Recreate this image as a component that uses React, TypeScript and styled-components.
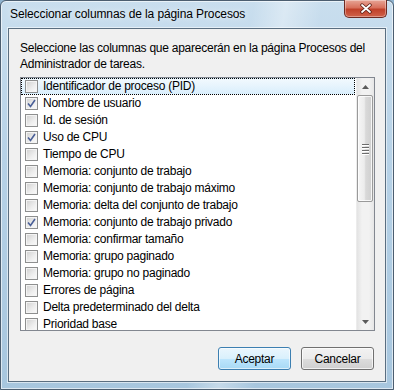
import React from 'react';
import styled, { createGlobalStyle } from 'styled-components';

const GlobalStyle = createGlobalStyle`
  html, body {
    margin: 0;
    padding: 0;
    width: 394px;
    height: 390px;
    overflow: hidden;
    background: #8fb3cf;
  }
  body {
    font-family: 'Liberation Sans', Arial, sans-serif;
    font-size: 12px;
    letter-spacing: -0.25px;
    color: #000;
  }
`;

type Column = { label: string; checked: boolean };

const columns: Column[] = [
  { label: 'Identificador de proceso (PID)', checked: false },
  { label: 'Nombre de usuario', checked: true },
  { label: 'Id. de sesión', checked: false },
  { label: 'Uso de CPU', checked: true },
  { label: 'Tiempo de CPU', checked: false },
  { label: 'Memoria: conjunto de trabajo', checked: false },
  { label: 'Memoria: conjunto de trabajo máximo', checked: false },
  { label: 'Memoria: delta del conjunto de trabajo', checked: false },
  { label: 'Memoria: conjunto de trabajo privado', checked: true },
  { label: 'Memoria: confirmar tamaño', checked: false },
  { label: 'Memoria: grupo paginado', checked: false },
  { label: 'Memoria: grupo no paginado', checked: false },
  { label: 'Errores de página', checked: false },
  { label: 'Delta predeterminado del delta', checked: false },
  { label: 'Prioridad base', checked: false },
];

const Window = styled.div`
  box-sizing: border-box;
  width: 394px;
  height: 390px;
  display: flex;
  flex-direction: column;
  padding: 0 7px 7px 7px;
  border: 1px solid #4c5e70;
  border-radius: 6px 6px 0 0;
  background:
    linear-gradient(100deg, rgba(255,255,255,0) 55%, rgba(255,255,255,0.35) 62%, rgba(255,255,255,0) 70%),
    linear-gradient(180deg, #c9deee 0%, #b7d2e7 40%, #a7c6de 100%);
  box-shadow: inset 0 0 0 1px rgba(255, 255, 255, 0.6);
`;

const TitleBar = styled.div`
  height: 27px;
  display: flex;
  align-items: flex-start;
  justify-content: space-between;
`;

const Title = styled.div`
  padding: 6px 0 0 2px;
  font-size: 12px;
  letter-spacing: -0.1px;
  color: #000;
  text-shadow: 0 0 6px rgba(255, 255, 255, 0.9);
`;

const CloseButton = styled.div`
  box-sizing: border-box;
  width: 43px;
  height: 18px;
  margin-right: -1px;
  margin-top: -1px;
  display: flex;
  align-items: center;
  justify-content: center;
  border: 1px solid #6d2a22;
  border-top: none;
  border-radius: 0 0 5px 5px;
  background: linear-gradient(180deg, #e7a596 0%, #d8705c 45%, #c0412a 55%, #d0624a 100%);
  box-shadow: inset 0 0 0 1px rgba(255, 255, 255, 0.35);
`;

const Client = styled.div`
  flex: 1;
  display: flex;
  flex-direction: column;
  padding: 11px 10px 0 11px;
  background: #f0f0f0;
  border: 1px solid #5a6e80;
  box-shadow: 0 0 0 1px rgba(255, 255, 255, 0.55);
`;

const Description = styled.p`
  margin: 0;
  line-height: 16px;
  white-space: nowrap;
`;

const ListBox = styled.div`
  box-sizing: border-box;
  height: 254px;
  margin-top: 5px;
  display: flex;
  border: 1px solid #828790;
  background: #fff;
`;

const Items = styled.div`
  flex: 1;
  display: flex;
  flex-direction: column;
  overflow: hidden;
`;

const Row = styled.div<{ $focused?: boolean }>`
  box-sizing: border-box;
  height: 17px;
  flex: none;
  display: flex;
  align-items: center;
  gap: 5px;
  padding-left: 3px;
  margin-right: 1px;
  white-space: nowrap;
  border: 1px dotted ${(p) => (p.$focused ? '#000' : 'transparent')};
  background: ${(p) => (p.$focused ? 'linear-gradient(180deg, #f2f9fe 0%, #d9eefc 100%)' : 'transparent')};
`;

const Box = styled.span`
  box-sizing: border-box;
  width: 13px;
  height: 13px;
  flex: none;
  position: relative;
  border: 1px solid #8e8f8f;
  background: linear-gradient(135deg, #cfcfcf 0%, #eeeeee 60%, #fbfbfb 100%);
  box-shadow: inset 0 0 0 1px #f4f4f4;
  svg {
    position: absolute;
    left: 1px;
    top: 1px;
  }
`;

const Label = styled.span`
  line-height: 15px;
`;

const ScrollBar = styled.div`
  width: 17px;
  flex: none;
  display: flex;
  flex-direction: column;
  background: linear-gradient(90deg, #e3e3e3 0%, #f2f2f2 30%, #f2f2f2 70%, #e6e6e6 100%);
  border-left: 1px solid #ececec;
`;

const Arrow = styled.div`
  height: 17px;
  display: flex;
  align-items: center;
  justify-content: center;
  flex: none;
`;

const Track = styled.div`
  flex: 1;
  display: flex;
  flex-direction: column;
`;

const Thumb = styled.div`
  box-sizing: border-box;
  height: 107px;
  margin: 0 1px 0 0;
  display: flex;
  align-items: center;
  justify-content: center;
  border: 1px solid #9a9a9a;
  border-radius: 2px;
  background: linear-gradient(90deg, #f6f6f6 0%, #ececec 45%, #d9d9d9 55%, #cfcfcf 100%);
  box-shadow: inset 0 0 0 1px rgba(255, 255, 255, 0.8);
`;

const Grip = styled.div`
  width: 7px;
  display: flex;
  flex-direction: column;
  gap: 2px;
  span {
    display: block;
    height: 1px;
    background: #6c6c6c;
    box-shadow: 0 1px 0 #fff;
  }
`;

const Buttons = styled.div`
  display: flex;
  justify-content: flex-end;
  gap: 10px;
  margin-top: 16px;
  padding-right: 1px;
`;

const Button = styled.button<{ $default?: boolean }>`
  box-sizing: border-box;
  width: 73px;
  height: 23px;
  padding: 0;
  font-family: inherit;
  font-size: 12px;
  letter-spacing: inherit;
  color: #000;
  border-radius: 3px;
  border: 1px solid ${(p) => (p.$default ? '#3c7fb1' : '#707070')};
  background: ${(p) =>
    p.$default
      ? 'linear-gradient(180deg, #eaf6fd 0%, #d9f0fc 50%, #bee6fd 51%, #a7d9f5 100%)'
      : 'linear-gradient(180deg, #f2f2f2 0%, #ebebeb 50%, #dddddd 51%, #cfcfcf 100%)'};
  box-shadow: inset 0 0 0 1px ${(p) => (p.$default ? 'rgba(255,255,255,0.6)' : 'rgba(255,255,255,0.7)')};
`;

const CheckBox: React.FC<{ checked: boolean }> = ({ checked }) => (
  <Box>
    {checked && (
      <svg width="9" height="9" viewBox="0 0 9 9">
        <path d="M1 4.5 L3.5 7.5 L8 1" fill="none" stroke="#4a5f97" strokeWidth="1.6" />
      </svg>
    )}
  </Box>
);

const App: React.FC = () => (
  <>
    <GlobalStyle />
    <Window>
      <TitleBar>
        <Title>Seleccionar columnas de la página Procesos</Title>
        <CloseButton>
          <svg width="14" height="11" viewBox="0 0 14 11">
            <path d="M3 2 L11 9 M11 2 L3 9" stroke="#5a1d14" strokeWidth="3.4" strokeLinecap="round" />
            <path d="M3 2 L11 9 M11 2 L3 9" stroke="#fff" strokeWidth="1.8" strokeLinecap="round" />
          </svg>
        </CloseButton>
      </TitleBar>
      <Client>
        <Description>
          Seleccione las columnas que aparecerán en la página Procesos del
          <br />
          Administrador de tareas.
        </Description>
        <ListBox>
          <Items>
            {columns.map((c, i) => (
              <Row key={c.label} $focused={i === 0}>
                <CheckBox checked={c.checked} />
                <Label>{c.label}</Label>
              </Row>
            ))}
          </Items>
          <ScrollBar>
            <Arrow>
              <svg width="7" height="4" viewBox="0 0 7 4">
                <path d="M0 4 L3.5 0 L7 4 Z" fill="#5b5b5b" />
              </svg>
            </Arrow>
            <Track>
              <Thumb>
                <Grip>
                  <span />
                  <span />
                  <span />
                  <span />
                </Grip>
              </Thumb>
            </Track>
            <Arrow>
              <svg width="7" height="4" viewBox="0 0 7 4">
                <path d="M0 0 L3.5 4 L7 0 Z" fill="#5b5b5b" />
              </svg>
            </Arrow>
          </ScrollBar>
        </ListBox>
        <Buttons>
          <Button $default>Aceptar</Button>
          <Button>Cancelar</Button>
        </Buttons>
      </Client>
    </Window>
  </>
);

export default App;
